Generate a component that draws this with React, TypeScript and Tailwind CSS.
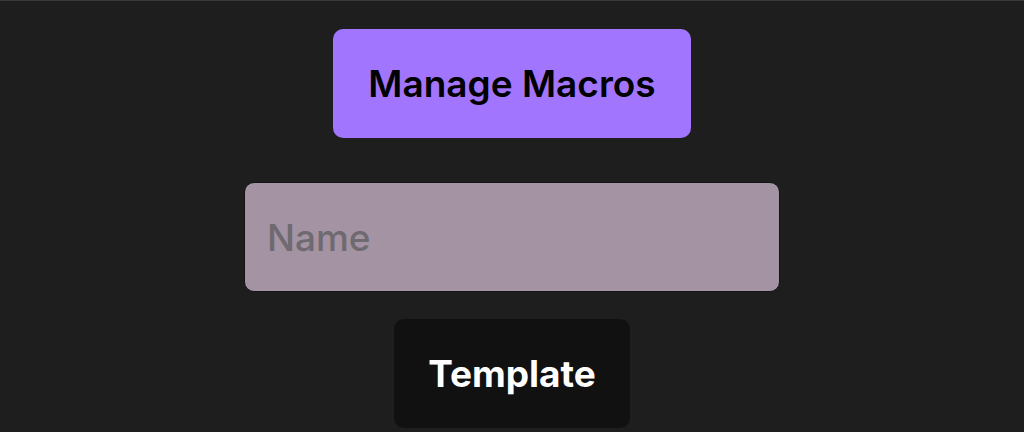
export default function App() {
  return (
    <div
      className="h-[432px] w-full overflow-hidden bg-[#1e1e1e] border-t border-[#3a3a3a] flex flex-col items-center"
      style={{ fontFamily: 'Inter, "Noto Sans", sans-serif' }}
    >
      <button className="mt-[28px] w-[358px] h-[109px] rounded-[10px] bg-[#a175fe] text-black text-[37px] font-semibold">
        Manage Macros
      </button>
      <input
        placeholder="Name"
        className="mt-[44px] w-[536px] h-[110px] rounded-[10px] bg-[#a393a3] border border-[#141214] px-[22px] text-[37px] font-medium text-black placeholder:text-[#6e6a70] outline-none"
      />
      <button className="mt-[27px] w-[236px] h-[109px] rounded-[10px] bg-[#111111] text-white text-[37px] font-bold">
        Template
      </button>
    </div>
  );
}
